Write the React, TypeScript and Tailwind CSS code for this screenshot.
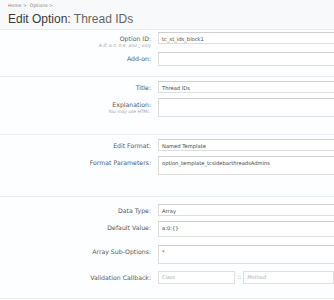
import React from "react";

const labelCls =
  "w-[152px] shrink-0 pr-[1px] text-right text-[6.2px] leading-[8px] text-[#585858]";
const inputCls =
  "w-[190px] shrink-0 ml-[6px] bg-white border border-[#dedede] border-t-[#cfcfcf] px-[3px] text-[5.2px] text-[#444] leading-[9px]";

function Row({
  label,
  hint,
  h = 12,
  value,
  className = "",
}: {
  label: string;
  hint?: string;
  h?: number;
  value?: string;
  className?: string;
}) {
  return (
    <div className={`flex items-start ${className}`}>
      <div className={labelCls} style={{ paddingTop: 3 }}>
        <div>{label}</div>
        {hint && <div className="text-[4.4px] italic leading-[6px] text-[#a5a5a5]">{hint}</div>}
      </div>
      <div className={inputCls} style={{ height: h, paddingTop: 1.5 }}>
        {value}
      </div>
    </div>
  );
}

export default function App() {
  return (
    <div
      className="w-[334px] h-[300px] overflow-hidden bg-white"
      style={{ fontFamily: '"DejaVu Sans", Verdana, sans-serif' }}
    >
      <div className="bg-[#f8f9fb] h-[30px] border-b border-[#e6edf3] px-[8px]">
        <div className="pt-[2px] text-[4.6px] leading-[7px] text-[#808080]">Home &gt; &nbsp;Options &gt;</div>
        <h1
          className="mt-[3px] text-[12px] leading-[14px] text-[#3a3a3a]"
          style={{ fontFamily: '"Liberation Sans", Arial, sans-serif' }}
        >
          Edit Option: <span className="text-[#666]">Thread IDs</span>
        </h1>
      </div>

      <div className="bg-[#fdfeff]">
        <div className="pt-[2px] pb-[10px] border-b border-[#e8eef4]">
          <Row label="Option ID:" hint="A-Z, a-z, 0-9, and _ only" value="tc_st_ids_block1" />
          <Row label="Add-on:" h={14} className="mt-[3px]" />
        </div>

        <div className="pt-[4px] pb-[17px] border-b border-[#e8eef4]">
          <Row label="Title:" value="Thread IDs" />
          <Row label="Explanation:" hint="You may use HTML." h={19} className="mt-[5px]" />
        </div>

        <div className="pt-[4px] pb-[21px] border-b border-[#e8eef4]">
          <Row label="Edit Format:" value="Named Template" />
          <Row label="Format Parameters:" value="option_template_tcsidebarthreadsAdmins" h={19} className="mt-[5px]" />
        </div>

        <div className="pt-[7px] pb-[14px] border-b border-[#e8eef4]">
          <Row label="Data Type:" value="Array" />
          <Row label="Default Value:" value="a:0:{}" h={16} className="mt-[5px]" />
          <Row label="Array Sub-Options:" value="*" h={19} className="mt-[8px]" />
          <div className="flex items-start mt-[7px]">
            <div className={labelCls} style={{ paddingTop: 3 }}>
              Validation Callback:
            </div>
            <div className="w-[85px] h-[13px] ml-[6px] bg-white border border-[#e0e0e0] px-[3px] text-[5px] italic leading-[10px] text-[#b0b0b0]">
              Class
            </div>
            <div className="w-[9px] text-center text-[5.5px] leading-[12px] text-[#777]">::</div>
            <div className="w-[100px] h-[13px] bg-white border border-[#e0e0e0] px-[3px] text-[5px] italic leading-[10px] text-[#b0b0b0]">
              Method
            </div>
          </div>
        </div>
      </div>
    </div>
  );
}
